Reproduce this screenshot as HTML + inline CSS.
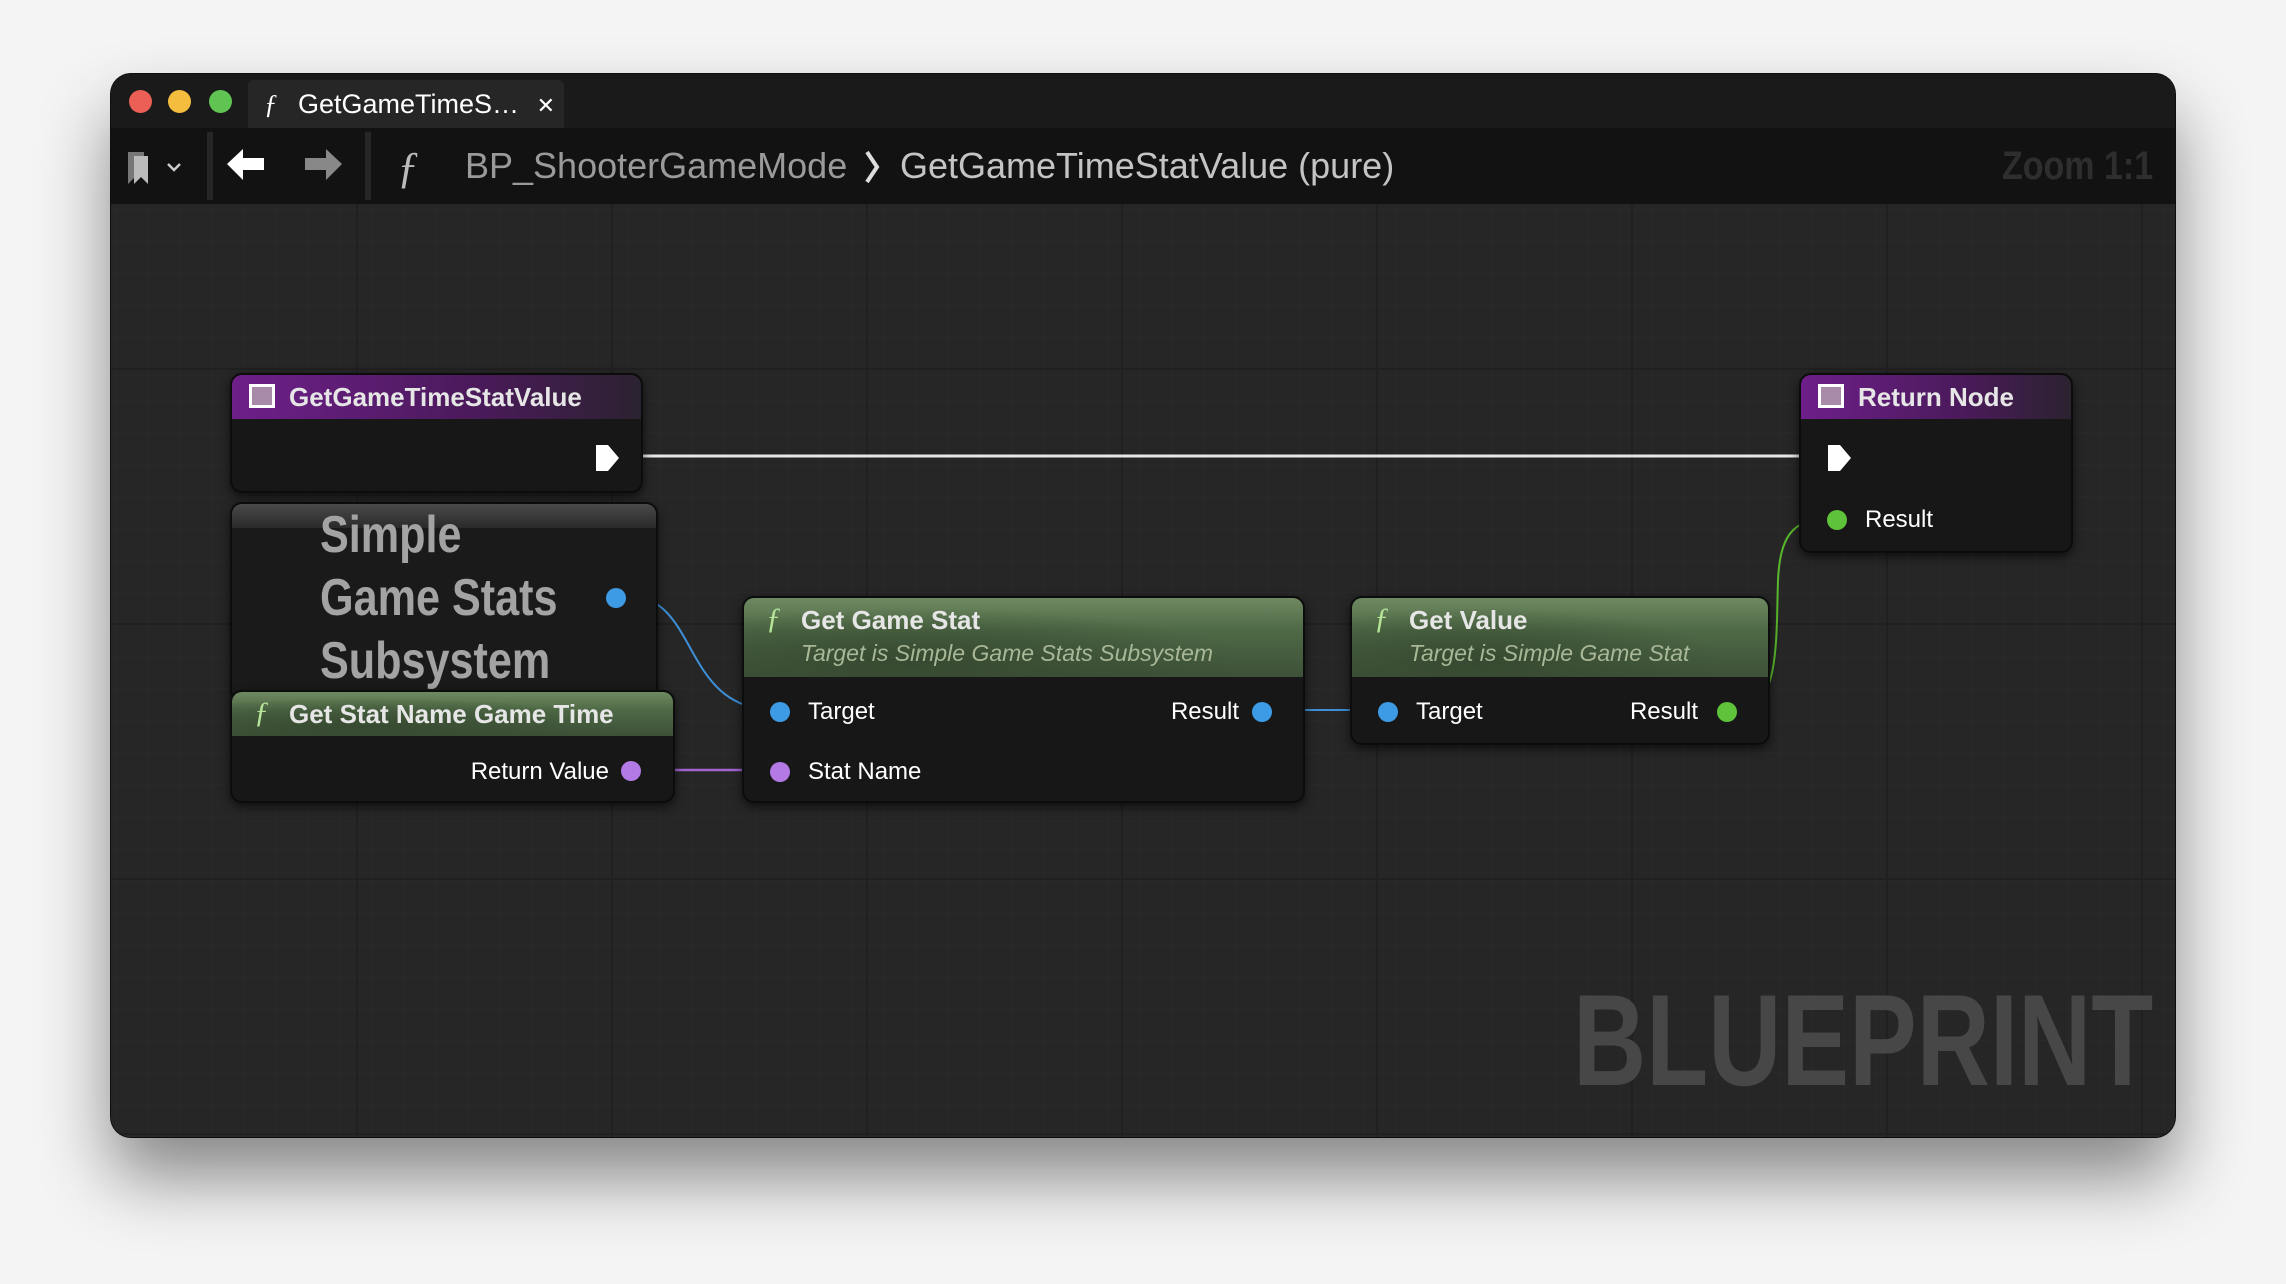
<!DOCTYPE html>
<html><head><meta charset="utf-8"><style>
*{margin:0;padding:0;box-sizing:border-box}
body{width:2286px;height:1284px;background:#f4f4f4;position:relative;overflow:hidden;font-family:"Liberation Sans",sans-serif}
.win{position:absolute;left:111px;top:74px;width:2064px;height:1063px;border-radius:20px;background:#262626;overflow:hidden;box-shadow:0 40px 70px rgba(0,0,0,.45),0 0 0 1px #111}
.tabbar{position:absolute;left:0;top:0;width:100%;height:54px;background:#1a1a1a}
.dot{position:absolute;top:16px;width:23px;height:23px;border-radius:50%}
.tab{position:absolute;left:137px;top:6px;width:316px;height:48px;background:#262626;border-radius:6px 6px 0 0;color:#fff;font-size:27px;line-height:48px;padding-left:50px}
.toolbar{position:absolute;left:0;top:54px;width:100%;height:76px;background:#121212}
.canvas{position:absolute;left:0;top:130px;width:100%;height:933px;
background-color:#262626;
background-image:linear-gradient(90deg,#202020 2px,transparent 2px),linear-gradient(#202020 2px,transparent 2px),linear-gradient(90deg,#292929 1px,transparent 1px),linear-gradient(#292929 1px,transparent 1px);
background-size:255px 255px,255px 255px,32px 32px,32px 32px;background-position:245px 164px,245px 164px,5px 4px,5px 4px}
.t{position:absolute;white-space:nowrap}
.node{position:absolute;background:#161716;border-radius:12px;box-shadow:0 4px 10px rgba(0,0,0,.6);border:2px solid #0c0c0c;overflow:hidden}
.hdr{position:absolute;left:0;top:0;width:100%}
.purple{background:linear-gradient(90deg,#6e1f8a,#4a1a5a 60%,#2b2230)}
.green{background:radial-gradient(ellipse at 30% 80%,#374a31 0%,transparent 60%),linear-gradient(180deg,#6f8a62,#4f6a46 40%,#3d5138)}
.title{position:absolute;color:#e6e6e6;font-weight:bold;font-size:26px;white-space:nowrap}
.sub{position:absolute;color:#a8b796;font-style:italic;font-size:23px;white-space:nowrap}
.lbl{position:absolute;color:#fff;font-size:24px;white-space:nowrap}
.fi{position:absolute;color:#b6e59a;font-style:italic;font-family:"Liberation Serif",serif;font-size:30px}
.pin{position:absolute;width:20px;height:20px;border-radius:50%}
.fn{position:absolute;width:26px;height:24px;border:3px solid #fff;background:#a68aa8}
</style></head><body>
<div class="win">
 <div class="tabbar">
  <div class="dot" style="left:18px;background:#ec5f57"></div>
  <div class="dot" style="left:57px;background:#f4bd3d"></div>
  <div class="dot" style="left:98px;background:#60c453"></div>
  <div class="tab"><span style="position:absolute;left:16px;font-family:'Liberation Serif',serif;font-style:italic">ƒ</span>GetGameTimeS… <span style="font-size:22px;margin-left:10px">✕</span></div>
 </div>
 <div class="toolbar">
  <svg style="position:absolute;left:17px;top:20px" width="60" height="40"><path d="M0 4h16v6h-10v20l-6 6z" fill="#777"/><path d="M6 8h14v28l-7-7-7 7z" fill="#bbb"/><path d="M40 16l6 6 6-6" stroke="#ccc" stroke-width="2.5" fill="none"/></svg>
  <div style="position:absolute;left:96px;top:4px;width:6px;height:68px;background:#262626"></div>
  <svg style="position:absolute;left:116px;top:21px" width="40" height="32"><path d="M0 15L16 0v9h21v12H16v10z" fill="#fff"/></svg>
  <svg style="position:absolute;left:193px;top:21px" width="40" height="32"><path d="M38 15L22 0v9H1v12h21v10z" fill="#888"/></svg>
  <div style="position:absolute;left:254px;top:4px;width:6px;height:68px;background:#262626"></div>
  <div class="t" style="left:286px;top:14px;color:#bbb;font-family:'Liberation Serif',serif;font-style:italic;font-size:44px">ƒ</div>
  <div class="t" style="left:354px;top:17px;color:#9a9a9a;font-size:36px">BP_ShooterGameMode</div>
  <svg style="position:absolute;left:752px;top:22px" width="20" height="34"><path d="M4 2l10 15-10 15" stroke="#ddd" stroke-width="4" fill="none"/></svg>
  <div class="t" style="left:789px;top:17px;color:#c4c4c4;font-size:36px">GetGameTimeStatValue (pure)</div>
  <div class="t" style="left:1891px;top:16px;color:#2e2e2e;font-size:40px;font-weight:bold;transform:scaleX(.85);transform-origin:left">Zoom 1:1</div>
 </div>
 <div class="canvas">
  <div class="t" style="left:1462px;top:761px;color:#474747;font-weight:bold;font-size:130px;line-height:150px;transform:scaleX(.78);transform-origin:left">BLUEPRINT</div>
 </div>
</div>
<svg style="position:absolute;left:0;top:0" width="2286" height="1284">
 <line x1="620" y1="456" x2="1826" y2="456" stroke="#e8e8e8" stroke-width="3"/>
 <path d="M628 596C700 596 680 710 776 710" stroke="#3d8fd6" stroke-width="2" fill="none"/>
 <path d="M640 770H776" stroke="#a364d2" stroke-width="2.5" fill="none"/>
 <path d="M1270 710H1386" stroke="#3d8fd6" stroke-width="2" fill="none"/>
 <path d="M1738 710C1780 710 1776 640 1778 580C1780 540 1790 518 1830 518" stroke="#59b82c" stroke-width="2" fill="none"/>
</svg>

<div class="node" style="left:230px;top:373px;width:413px;height:120px">
 <div class="hdr purple" style="height:44px"></div>
 <div class="fn" style="left:17px;top:9px"></div>
 <div class="title" style="left:57px;top:7px">GetGameTimeStatValue</div>
 <svg style="position:absolute;left:362px;top:68px" width="28" height="30"><path d="M2 2h12l11 13-11 13H2z" fill="#fff"/></svg>
</div>
<div class="node" style="left:230px;top:502px;width:428px;height:200px;background:#1a1a1a">
 <div class="hdr" style="height:24px;background:linear-gradient(#4a4a4a,#2a2a2a)"></div>
 <div class="t" style="left:88px;top:0px;color:#a3a3a3;font-weight:bold;font-size:52px;line-height:63px;transform:scaleX(.83);transform-origin:left">Simple<br>Game Stats<br>Subsystem</div>
 <div class="pin" style="left:374px;top:84px;background:#3d9be6"></div>
</div>
<div class="node" style="left:230px;top:690px;width:445px;height:113px">
 <div class="hdr green" style="height:44px"></div>
 <div class="fi" style="left:22px;top:4px">ƒ</div>
 <div class="title" style="left:57px;top:7px">Get Stat Name Game Time</div>
 <div class="lbl" style="right:64px;top:66px">Return Value</div>
 <div class="pin" style="left:389px;top:69px;background:#b37ae6"></div>
</div>
<div class="node" style="left:742px;top:596px;width:563px;height:207px">
 <div class="hdr green" style="height:79px"></div>
 <div class="fi" style="left:22px;top:4px">ƒ</div>
 <div class="title" style="left:57px;top:7px">Get Game Stat</div>
 <div class="sub" style="left:57px;top:42px">Target is Simple Game Stats Subsystem</div>
 <div class="pin" style="left:26px;top:104px;background:#3d9be6"></div>
 <div class="lbl" style="left:64px;top:100px">Target</div>
 <div class="lbl" style="right:64px;top:100px">Result</div>
 <div class="pin" style="left:508px;top:104px;background:#3d9be6"></div>
 <div class="pin" style="left:26px;top:164px;background:#b37ae6"></div>
 <div class="lbl" style="left:64px;top:160px">Stat Name</div>
</div>
<div class="node" style="left:1350px;top:596px;width:420px;height:149px">
 <div class="hdr green" style="height:79px"></div>
 <div class="fi" style="left:22px;top:4px">ƒ</div>
 <div class="title" style="left:57px;top:7px">Get Value</div>
 <div class="sub" style="left:57px;top:42px">Target is Simple Game Stat</div>
 <div class="pin" style="left:26px;top:104px;background:#3d9be6"></div>
 <div class="lbl" style="left:64px;top:100px">Target</div>
 <div class="lbl" style="right:70px;top:100px">Result</div>
 <div class="pin" style="left:365px;top:104px;background:#5ec23a"></div>
</div>
<div class="node" style="left:1799px;top:373px;width:274px;height:180px">
 <div class="hdr purple" style="height:44px"></div>
 <div class="fn" style="left:17px;top:9px"></div>
 <div class="title" style="left:57px;top:7px">Return Node</div>
 <svg style="position:absolute;left:25px;top:68px" width="28" height="30"><path d="M2 2h12l11 13-11 13H2z" fill="#fff"/></svg>
 <div class="pin" style="left:26px;top:135px;background:#5ec23a"></div>
 <div class="lbl" style="left:64px;top:131px">Result</div>
</div>
</body></html>
